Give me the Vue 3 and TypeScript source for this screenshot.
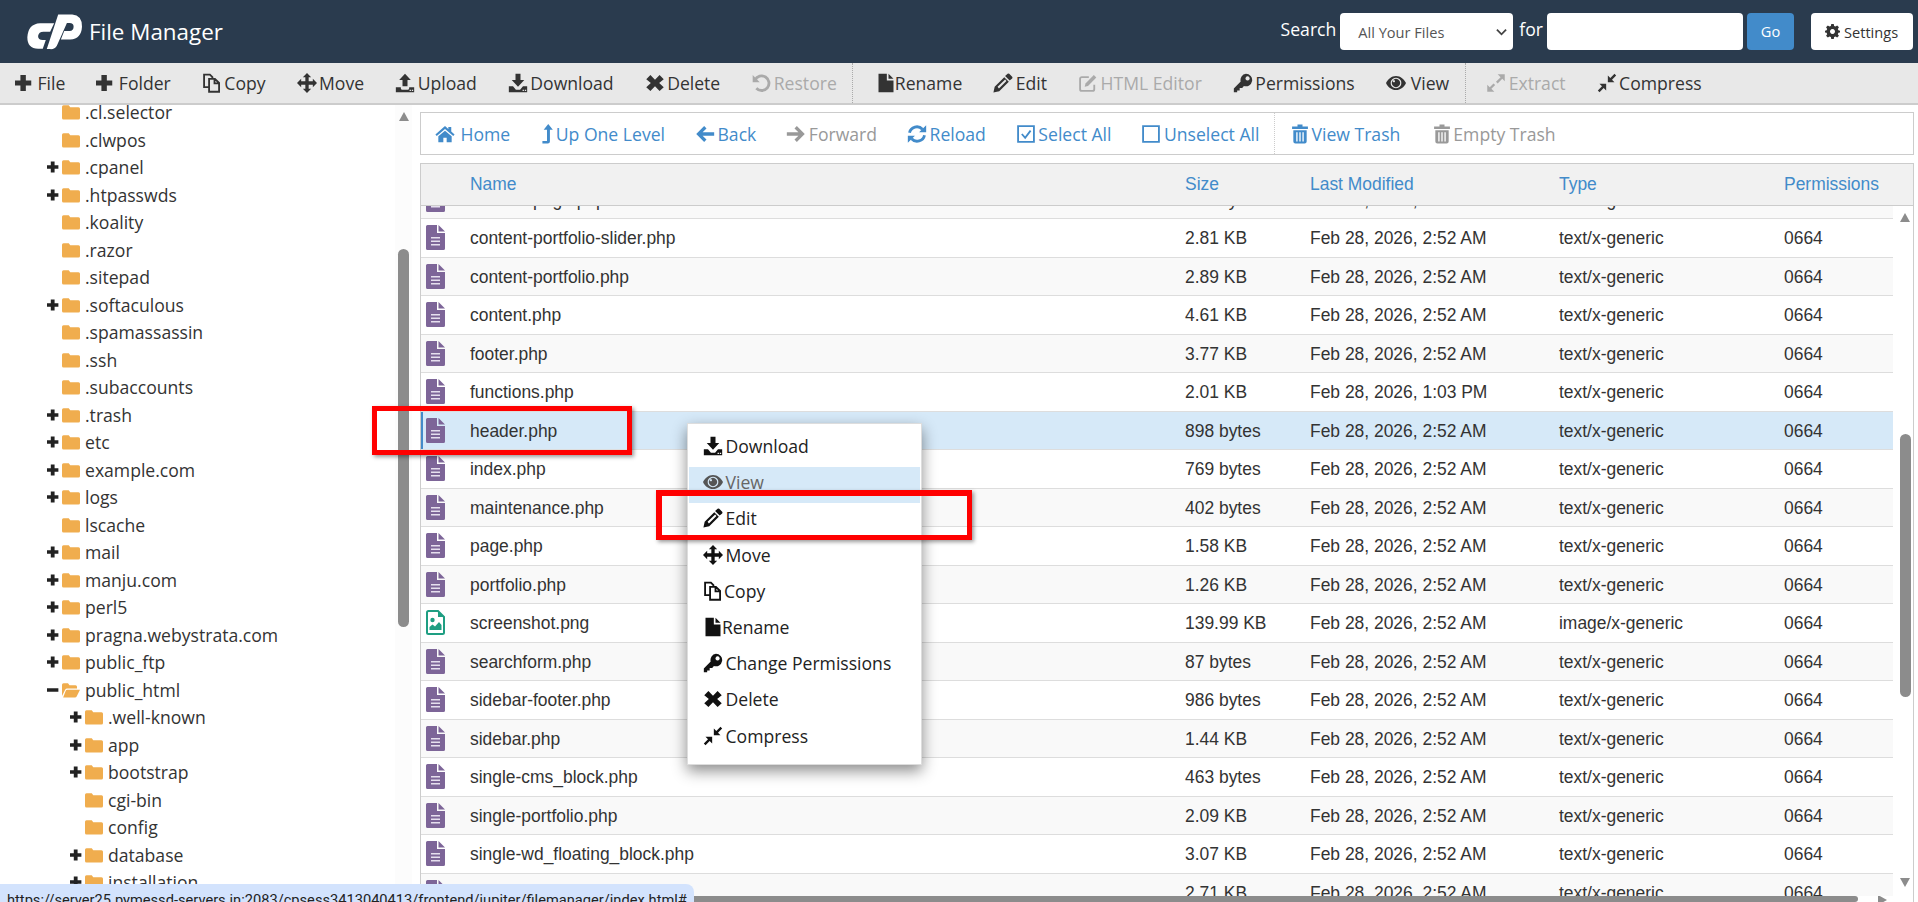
<script setup lang="ts">
import { h } from 'vue'
import type { FunctionalComponent } from 'vue'

type IconDef = { f?: string; l?: string }

// font-awesome 4 look-alikes, all on a 24 box. f = filled, l = stroked
const icons: Record<string, IconDef> = {
  plus: { f: 'M6.5 2.5H13V9h6.5v6H13v6.5H6.5V15H0V9h6.5z' },
  copy: { l: 'M8.5 17H2.5V2h7l3 3v2M8.5 7h7l5 5v10.5h-12zM15 7.5V12.5h5' },
  move: { f: 'M12 0l5 5h-3v5h5V7l5 5-5 5v-3h-5v5h3l-5 5-5-5h3v-5H5v3l-5-5 5-5v3h5V5H7z' },
  upload: { f: 'M12 1l7 7.5h-4V16H9V8.5H5zM1 17h6v1.2c0 1 .8 1.8 1.8 1.8h6.4c1 0 1.8-.8 1.8-1.8V17h6v6H1zM17.5 20h1.6v1.6h-1.6zM20.2 20h1.6v1.6h-1.6z' },
  download: { f: 'M9 1h6v7.5h4.5L12 16.5 4.5 8.5H9zM1 16h5l3.5 4h5l3.5-4h5v7H1zM17.5 20h1.6v1.6h-1.6zM20.2 20h1.6v1.6h-1.6z' },
  times: { f: 'M6.5 2.5l5.5 5.5 5.5-5.5 5 5-5.5 4.5 5.5 5-5 4.5-5.5-5.5-5.5 5.5-5-4.5 5.5-5-5.5-4.5z' },
  undo: { f: 'M2 2.5v8.5h8.5z', l: 'M4.8 8.5a8.8 8.8 0 1 1 1.6 9.8' },
  file: { f: 'M3 1h10v8h8v14H3zM15 1l6 6h-6z' },
  pencil: { f: 'M17.5 1a1.5 1.5 0 0 1 2 0l3.5 3.5a1.5 1.5 0 0 1 0 2L20 9l-5.5-5.5zM13.5 5l5.5 5.5L7.5 22l-7 1.5 1.5-7zM5.5 16.5l1.6 2 9-9-1.5-1.6z' },
  edit: { f: 'M19 2.5l3 3L12 15.5l-4 1 1-4z', l: 'M19.5 14v5.5a2 2 0 0 1-2 2H4.5a2 2 0 0 1-2-2V7a2 2 0 0 1 2-2H13' },
  key: { f: 'M15.5 1a7.5 7.5 0 1 1-2.4 14.6L11 18H8v3H5v2H1v-4.5l8.2-8.2A7.5 7.5 0 0 1 15.5 1zM17.5 4a2.5 2.5 0 1 0 .01 0z' },
  eye: { f: 'M12 3.5C6.5 3.5 2 7.5 0 12c2 4.5 6.5 8.5 12 8.5S22 16.5 24 12c-2-4.5-6.5-8.5-12-8.5zM12 5.6a6.4 6.4 0 1 0 .01 0zM12 7a5 5 0 1 1-.01 0zM9.5 8.5a1.3 1.3 0 1 0 .01 0z' },
  expand: { f: 'M14 1.5h8.5V10l-3-3-5.5 5.5-2-2L17.5 5zM10 22.5H1.5V14l3 3 4.5-4.5 2 2L6.5 19z' },
  compress: { f: 'M21 1l2 2-5 5 3 3h-8V3l3 3zM3 23l-2-2 5-5-3-3h8v8l-3-3z' },
  home: { f: 'M12 2.5L.5 12.5l1.6 1.9L12 6l9.9 8.4 1.6-1.9L19.5 9V3.5h-3.5v2.5zM12 8l-8 6.8V22h6v-5.5h4V22h6v-7.2z' },
  levelUp: { f: 'M13.5 0l5.5 7h-3.5v14a2.5 2.5 0 0 1-2.5 2.5H6.5V20.5h5.5V7H8z' },
  left: { f: 'M1.5 12L11 2.5l2.8 2.8-4.7 4.7H23v4H9.1l4.7 4.7-2.8 2.8z' },
  right: { f: 'M22.5 12L13 2.5l-2.8 2.8 4.7 4.7H1v4h13.9l-4.7 4.7 2.8 2.8z' },
  reload: { f: 'M23 1.5V10h-8.5zM1 22.5V14h8.5z', l: 'M3 10.5a9 9 0 0 1 15.5-4.2M21 13.5a9 9 0 0 1-15.5 4.2' },
  check: { l: 'M2.5 2.5h19v19h-19zM7 12l4 4.5 6.5-8.5' },
  square: { l: 'M2.5 2.5h19v19h-19z' },
  trash: { f: 'M9 .5h6v2.5h6.5v3h-19V3H9zM4 7.5h16V21a2.5 2.5 0 0 1-2.5 2.5h-11A2.5 2.5 0 0 1 4 21zM7.5 10v11h1.6V10zM11.2 10v11h1.6V10zM14.9 10v11h1.6V10z' },
  gear: { f: 'M10 0H14L14.6 3.2 16.8 4.1 19.5 2.3 22.3 5.1 20.5 7.8 21.4 10 24 10.6V13.4L21.4 14 20.5 16.2 22.3 18.9 19.5 21.7 16.8 19.9 14.6 20.8 14 24H10L9.4 20.8 7.2 19.9 4.5 21.7 1.7 18.9 3.5 16.2 2.6 14 0 13.4V10.6L2.6 10 3.5 7.8 1.7 5.1 4.5 2.3 7.2 4.1 9.4 3.2ZM12 8a4 4 0 1 0 .01 0Z' },
  folder: { f: 'M2 3h7l2 2.5h11a2 2 0 0 1 2 2V20a2 2 0 0 1-2 2H2a2 2 0 0 1-2-2V5a2 2 0 0 1 2-2z' },
  folderOpen: { f: 'M2 3h6l2 2.5h8a2 2 0 0 1 2 2V10H7a3 3 0 0 0-2.8 1.8L0 20V5a2 2 0 0 1 2-2zM7 11.5h17l-4.5 9a2.5 2.5 0 0 1-2.2 1.5H1.5L5 13a2.2 2.2 0 0 1 2-1.5z' },
  minus: { f: 'M0 9h19.5v6H0z' }
}

const Ico: FunctionalComponent<{ n: string }> = (props) => {
  const def = icons[props.n]
  const kids = []
  if (def.f) kids.push(h('path', { d: def.f, fill: 'currentColor', 'fill-rule': 'evenodd' }))
  if (def.l) kids.push(h('path', { d: def.l, fill: 'none', stroke: 'currentColor', 'stroke-width': props.n === 'undo' || props.n === 'reload' ? 3.4 : 2.2 }))
  return h('svg', { viewBox: '0 0 24 24' }, kids)
}
Ico.props = ['n']

const toolsA = [
  { icon: 'plus', label: 'File' },
  { icon: 'plus', label: 'Folder' },
  { icon: 'copy', label: 'Copy' },
  { icon: 'move', label: 'Move' },
  { icon: 'upload', label: 'Upload' },
  { icon: 'download', label: 'Download' },
  { icon: 'times', label: 'Delete' },
  { icon: 'undo', label: 'Restore', off: true }
]
const toolsB = [
  { icon: 'file', label: 'Rename', narrow: true },
  { icon: 'pencil', label: 'Edit' },
  { icon: 'edit', label: 'HTML Editor', off: true },
  { icon: 'key', label: 'Permissions' },
  { icon: 'eye', label: 'View', wide: true }
]
const toolsC = [
  { icon: 'expand', label: 'Extract', off: true },
  { icon: 'compress', label: 'Compress' }
]
const navA = [
  { icon: 'home', label: 'Home', wide: true },
  { icon: 'levelUp', label: 'Up One Level', narrow: true },
  { icon: 'left', label: 'Back' },
  { icon: 'right', label: 'Forward', off: true },
  { icon: 'reload', label: 'Reload' },
  { icon: 'check', label: 'Select All' },
  { icon: 'square', label: 'Unselect All' }
]
const navB = [
  { icon: 'trash', label: 'View Trash' },
  { icon: 'trash', label: 'Empty Trash', off: true }
]

const tree = [
  { name: '.cl.selector' }, { name: '.clwpos' }, { name: '.cpanel', t: 'plus' }, { name: '.htpasswds', t: 'plus' },
  { name: '.koality' }, { name: '.razor' }, { name: '.sitepad' }, { name: '.softaculous', t: 'plus' },
  { name: '.spamassassin' }, { name: '.ssh' }, { name: '.subaccounts' }, { name: '.trash', t: 'plus' },
  { name: 'etc', t: 'plus' }, { name: 'example.com', t: 'plus' }, { name: 'logs', t: 'plus' }, { name: 'lscache' },
  { name: 'mail', t: 'plus' }, { name: 'manju.com', t: 'plus' }, { name: 'perl5', t: 'plus' },
  { name: 'pragna.webystrata.com', t: 'plus' }, { name: 'public_ftp', t: 'plus' }, { name: 'public_html', t: 'minus' },
  { name: '.well-known', t: 'plus', sub: true }, { name: 'app', t: 'plus', sub: true }, { name: 'bootstrap', t: 'plus', sub: true },
  { name: 'cgi-bin', sub: true }, { name: 'config', sub: true }, { name: 'database', t: 'plus', sub: true },
  { name: 'installation', t: 'plus', sub: true }
]

const d = 'Feb 28, 2026, 2:52 AM'
const g = 'text/x-generic'
const files = [
  { name: 'content-page.php', size: '512 bytes', date: d, type: g },
  { name: 'content-portfolio-slider.php', size: '2.81 KB', date: d, type: g },
  { name: 'content-portfolio.php', size: '2.89 KB', date: d, type: g },
  { name: 'content.php', size: '4.61 KB', date: d, type: g },
  { name: 'footer.php', size: '3.77 KB', date: d, type: g },
  { name: 'functions.php', size: '2.01 KB', date: 'Feb 28, 2026, 1:03 PM', type: g },
  { name: 'header.php', size: '898 bytes', date: d, type: g, sel: true },
  { name: 'index.php', size: '769 bytes', date: d, type: g },
  { name: 'maintenance.php', size: '402 bytes', date: d, type: g },
  { name: 'page.php', size: '1.58 KB', date: d, type: g },
  { name: 'portfolio.php', size: '1.26 KB', date: d, type: g },
  { name: 'screenshot.png', size: '139.99 KB', date: d, type: 'image/x-generic', img: true },
  { name: 'searchform.php', size: '87 bytes', date: d, type: g },
  { name: 'sidebar-footer.php', size: '986 bytes', date: d, type: g },
  { name: 'sidebar.php', size: '1.44 KB', date: d, type: g },
  { name: 'single-cms_block.php', size: '463 bytes', date: d, type: g },
  { name: 'single-portfolio.php', size: '2.09 KB', date: d, type: g },
  { name: 'single-wd_floating_block.php', size: '3.07 KB', date: d, type: g },
  { name: 'single.php', size: '2.71 KB', date: d, type: g }
]

const menu = [
  { icon: 'download', label: 'Download' },
  { icon: 'eye', label: 'View', hover: true },
  { icon: 'pencil', label: 'Edit' },
  { icon: 'move', label: 'Move' },
  { icon: 'copy', label: 'Copy', tight: true },
  { icon: 'file', label: 'Rename', narrow: true },
  { icon: 'key', label: 'Change Permissions' },
  { icon: 'times', label: 'Delete' },
  { icon: 'compress', label: 'Compress' }
]
</script>

<template>
  <div class="app">
    <header class="top">
      <div class="brand">
        <svg class="logo" viewBox="20 20 170 108">
          <path d="M104 48L92 73H72Q58 73 56 86Q56 98 70 98H79L70 124H56Q24 124 24 90Q26 50 62 48Z" />
          <path d="M116 22H158Q187 24 187 58Q185 94 152 96H124L134 71H150Q162 70 162 58Q162 47 150 47H142L112 115Q106 126 92 125H82Z" />
        </svg>
        <span class="title">File Manager</span>
      </div>
      <div class="search">
        <span>Search</span>
        <div class="select">All Your Files
          <svg class="chev" viewBox="0 0 12 8"><path d="M1 1.5l5 5 5-5" /></svg>
        </div>
        <span>for</span>
        <div class="input"></div>
        <div class="go">Go</div>
        <div class="settings"><Ico n="gear" class="gear" />Settings</div>
      </div>
    </header>

    <nav class="tools">
      <div class="group">
        <div v-for="t in toolsA" :key="t.label" class="tool" :class="{ off: t.off }"><Ico :n="t.icon" class="ico" />{{ t.label }}</div>
      </div>
      <div class="group sep">
        <div v-for="t in toolsB" :key="t.label" class="tool" :class="{ off: t.off, narrow: t.narrow, wide: t.wide }"><Ico :n="t.icon" class="ico" />{{ t.label }}</div>
      </div>
      <div class="group sep last">
        <div v-for="t in toolsC" :key="t.label" class="tool" :class="{ off: t.off }"><Ico :n="t.icon" class="ico" />{{ t.label }}</div>
      </div>
    </nav>

    <div class="body">
      <aside class="side">
        <div class="tree">
          <div v-for="f in tree" :key="f.name" class="node" :class="{ sub: f.sub }">
            <span class="toggle"><Ico v-if="f.t" :n="f.t" /></span>
            <Ico :n="f.t === 'minus' ? 'folderOpen' : 'folder'" class="folder" />
            <span>{{ f.name }}</span>
          </div>
        </div>
        <div class="side-bar">
          <i class="arrow-up"></i>
          <div class="thumb"></div>
        </div>
      </aside>

      <main class="main">
        <div class="nav">
          <div v-for="t in navA" :key="t.label" class="link" :class="{ off: t.off, narrow: t.narrow, wide: t.wide }"><Ico :n="t.icon" class="ico" />{{ t.label }}</div>
          <div class="nav-sep"></div>
          <div v-for="t in navB" :key="t.label" class="link trash" :class="{ off: t.off }"><Ico :n="t.icon" class="ico" />{{ t.label }}</div>
        </div>

        <section class="table">
          <div class="row head">
            <span></span><span>Name</span><span>Size</span><span>Last Modified</span><span>Type</span><span>Permissions</span>
          </div>
          <div class="table-body">
            <div class="rows">
              <div v-for="f in files" :key="f.name" class="row item" :class="{ sel: f.sel }">
                <span class="cell-icon">
                  <svg v-if="f.img" class="doc" viewBox="0 0 19 25">
                    <path d="M2.5 1h9.5l6 6v15.5a1.5 1.5 0 0 1-1.5 1.5h-14A1.5 1.5 0 0 1 1 22.5v-20A1.5 1.5 0 0 1 2.5 1z" fill="#fff" stroke="#1e9e82" stroke-width="2" />
                    <path d="M12 1v6h6z" fill="#1e9e82" />
                    <circle cx="6.5" cy="10" r="2.2" fill="#1e9e82" />
                    <path d="M3.5 20v-3l3-2.5 2.5 2 4-4.5 2.5 3v5z" fill="#1e9e82" />
                  </svg>
                  <svg v-else class="doc" viewBox="0 0 19 25">
                    <path d="M1.5 0H11v8h8v15.5a1.5 1.5 0 0 1-1.5 1.5h-16A1.5 1.5 0 0 1 0 23.5v-22A1.5 1.5 0 0 1 1.5 0z" fill="#7d6598" />
                    <path d="M12.5 0L19 6.5h-6.5z" fill="#7d6598" />
                    <path d="M5 12h9v1.5H5zM5 15.5h9V17H5zM5 19h9v1.5H5z" fill="#e6dfee" />
                  </svg>
                </span>
                <span>{{ f.name }}</span>
                <span>{{ f.size }}</span>
                <span>{{ f.date }}</span>
                <span>{{ f.type }}</span>
                <span>0664</span>
              </div>
            </div>
            <div class="table-bar">
              <i class="arrow-up"></i>
              <div class="thumb"></div>
              <i class="arrow-down"></i>
            </div>
          </div>
          <div class="hbar">
            <div class="hthumb"></div>
            <i class="arrow-right"></i>
          </div>
        </section>
      </main>
    </div>

    <div class="menu">
      <div v-for="m in menu" :key="m.label" class="menu-item" :class="{ hover: m.hover, tight: m.tight, narrow: m.narrow }"><Ico :n="m.icon" class="ico" />{{ m.label }}</div>
    </div>

    <div class="mark mark-row"></div>
    <div class="mark mark-edit"></div>

    <div class="status">https://server25.pymessd-servers.in:2083/cpsess3413040413/frontend/jupiter/filemanager/index.html#</div>
  </div>
</template>

<style>
html, body {
  margin: 0;
  background: #fff;
}
</style>

<style scoped>
.app {
  position: relative;
  width: 1918px;
  height: 902px;
  overflow: hidden;
  display: flex;
  flex-direction: column;
  font-family: "Open Sans", "Liberation Sans", sans-serif;
  font-size: 17.6px;
  color: #333;
  background: #fff;
}

.top {
  height: 63px;
  flex: none;
  display: flex;
  justify-content: space-between;
  align-items: center;
  padding: 0 5px 0 26px;
  background: #2a3b4e;
  color: #fff;
}
.brand {
  display: flex;
  align-items: center;
  gap: 6px;
}
.logo {
  width: 57px;
  height: 38px;
  fill: #fff;
}
.title {
  font-size: 22.4px;
}
.search {
  display: flex;
  align-items: center;
  height: 37px;
}
.search > span {
  margin: -5px 4px 0 0;
}
.select {
  position: relative;
  box-sizing: border-box;
  width: 173px;
  height: 37px;
  margin-right: 6px;
  padding: 9px 0 0 18px;
  border-radius: 4px;
  background: #fff;
  color: #555;
  font-size: 14.6px;
}
.chev {
  position: absolute;
  right: 6px;
  top: 15px;
  width: 11px;
  height: 8px;
  fill: none;
  stroke: #444;
  stroke-width: 2;
}
.input {
  width: 196px;
  height: 37px;
  margin-right: 4px;
  border-radius: 4px;
  background: #fff;
}
.go {
  width: 47px;
  height: 37px;
  line-height: 37px;
  text-align: center;
  border-radius: 4px;
  background: #428bca;
  font-size: 14.6px;
}
.settings {
  display: flex;
  align-items: center;
  box-sizing: border-box;
  width: 102px;
  height: 37px;
  margin-left: 17px;
  padding-left: 14px;
  border-radius: 4px;
  background: #fff;
  color: #333;
  font-size: 14.6px;
}
.gear {
  width: 15px;
  height: 15px;
  margin-right: 4px;
}

.tools {
  height: 42px;
  flex: none;
  box-sizing: border-box;
  display: flex;
  margin-left: -.5px;
  background: #e8e8e8;
  border-bottom: 2px solid #ccc;
}
.group {
  display: flex;
  align-items: center;
}
.sep {
  padding-left: 7px;
  border-left: 1px dotted #aaa;
}
.sep.last {
  padding-left: 5px;
}
.tool {
  display: flex;
  align-items: center;
  padding: 0 15.5px;
  white-space: nowrap;
}
.ico {
  width: 20px;
  height: 20px;
  margin-right: 2.5px;
  flex: none;
}
.tool.narrow .ico,
.menu-item.narrow .ico {
  margin-right: -1px;
}
.tool.wide .ico {
  margin-right: 5px;
}
.off {
  color: #aaa;
}

.body {
  flex: 1;
  min-height: 0;
  display: flex;
}

.side {
  width: 420px;
  flex: none;
  display: flex;
  overflow: hidden;
}
.tree {
  flex: 1;
  margin-top: -6.5px;
  min-width: 0;
}
.node {
  display: flex;
  align-items: center;
  height: 27.5px;
  padding-left: 47px;
  white-space: nowrap;
}
.node.sub {
  padding-left: 70px;
}
.toggle {
  width: 15px;
  flex: none;
  display: flex;
  color: #222;
}
.toggle svg {
  width: 14px;
  height: 14px;
}
.folder {
  width: 18px;
  height: 18px;
  margin-right: 5px;
  flex: none;
  color: #f0ad4e;
}
.side-bar {
  width: 17px;
  margin-right: 8px;
  flex: none;
  display: flex;
  flex-direction: column;
  align-items: center;
  background: #fcfcfc;
}
.side-bar .arrow-up {
  margin-top: 7px;
}
.side-bar .thumb {
  height: 378px;
  margin-top: 128px;
}
.arrow-up {
  width: 0;
  height: 0;
  border-left: 5.5px solid transparent;
  border-right: 5.5px solid transparent;
  border-bottom: 9px solid #8c8c8c;
}
.arrow-down {
  width: 0;
  height: 0;
  border-left: 5.5px solid transparent;
  border-right: 5.5px solid transparent;
  border-top: 9px solid #8c8c8c;
}
.thumb {
  width: 11px;
  border-radius: 6px;
  background: #8c8c8c;
}

.main {
  flex: 1;
  min-width: 0;
  display: flex;
  flex-direction: column;
  padding: 7px 4px 0 0;
}
.nav {
  height: 43px;
  flex: none;
  box-sizing: border-box;
  display: flex;
  align-items: center;
  padding-left: 1.5px;
  border: 1px solid #ccc;
  color: #428bca;
}
.link {
  display: flex;
  align-items: center;
  padding: 0 12px;
  margin-right: 6px;
  white-space: nowrap;
}
.link.narrow .ico {
  margin-right: -1px;
}
.link.wide {
  margin-right: 2.5px;
}
.link.wide .ico {
  margin-right: 6px;
}
.link.trash {
  margin-right: 8px;
}
.link.trash .ico {
  margin-right: 1px;
}
.link.off {
  color: #999;
}
.nav-sep {
  align-self: stretch;
  width: 0;
  margin: 0 3px 0 -3px;
  border-left: 1px dotted #ccc;
}

.table {
  flex: 1;
  min-height: 0;
  margin-top: 8px;
  display: flex;
  flex-direction: column;
  border: 1px solid #ccc;
  border-bottom: 0;
  font-family: "Liberation Sans", Arial, sans-serif;
  font-size: 17.45px;
}
.row {
  display: grid;
  grid-template-columns: 49px 715px 125px 249px 225px 1fr;
  align-items: center;
}
.head {
  height: 42px;
  flex: none;
  box-sizing: border-box;
  background: #f1f1f1;
  border-bottom: 1px solid #ccc;
  color: #428bca;
}
.table-body {
  flex: 1;
  min-height: 0;
  display: flex;
  overflow: hidden;
}
.rows {
  flex: 1;
  min-width: 0;
  margin-top: -25.5px;
}
.item {
  box-sizing: border-box;
  height: 38.5px;
  padding-top: 1.5px;
  border-bottom: 1px solid #ddd;
  white-space: nowrap;
}
.item:nth-child(odd) {
  background: #f9f9f9;
}
.item.sel {
  background: #d6e9f8;
  box-shadow: inset 2px 0 0 #428bca;
}
.cell-icon {
  display: flex;
  padding-left: 5px;
  margin-top: -1.5px;
}
.doc {
  width: 19px;
  height: 25px;
}
.table-bar {
  width: 20px;
  flex: none;
  box-sizing: border-box;
  display: flex;
  flex-direction: column;
  align-items: center;
  padding-left: 4px;
}
.table-bar .arrow-up {
  margin-top: 7px;
}
.table-bar .thumb {
  height: 263px;
  margin-top: 212px;
}
.table-bar .arrow-down {
  margin-top: 181px;
}
.hbar {
  height: 6px;
  flex: none;
  display: flex;
  overflow: hidden;
}
.hthumb {
  width: 1437px;
  border-radius: 0 6px 6px 0;
  background: #8c8c8c;
}
.arrow-right {
  width: 0;
  height: 0;
  margin-left: 20px;
  border-top: 5.5px solid transparent;
  border-bottom: 5.5px solid transparent;
  border-left: 9px solid #8c8c8c;
  transform: translateY(-1px);
}

.menu {
  position: absolute;
  left: 687px;
  top: 423px;
  width: 235px;
  height: 342px;
  box-sizing: border-box;
  padding: 6.5px 1px 0;
  background: #fff;
  border: 1px solid #ddd;
  box-shadow: 0 6px 14px rgba(0, 0, 0, 0.45);
}
.menu-item {
  display: flex;
  align-items: center;
  box-sizing: border-box;
  height: 36.2px;
  padding: 0 0 5px 14px;
  color: #222;
  white-space: nowrap;
}
.menu-item .ico {
  color: #111;
}
.menu-item.tight .ico {
  margin-right: 1px;
}
.menu-item.hover {
  background: #d6e9f8;
  color: #666;
}
.menu-item.hover .ico {
  color: #555;
}

.mark {
  position: absolute;
  box-sizing: border-box;
  border: 5px solid #f00;
  box-shadow: 2px 2px 4px rgba(0, 0, 0, 0.4);
}
.mark-row {
  left: 372px;
  top: 406px;
  width: 260px;
  height: 49px;
}
.mark-edit {
  left: 656px;
  top: 490px;
  width: 316px;
  height: 50px;
  border-width: 6px 5px 5px 6px;
}

.status {
  position: absolute;
  left: 0;
  bottom: 0;
  box-sizing: border-box;
  width: 694px;
  height: 18px;
  padding: 4.5px 0 0 7px;
  overflow: hidden;
  border-radius: 0 8px 0 0;
  background: #d3e3fd;
  color: #222;
  font-family: Roboto, "Liberation Sans", sans-serif;
  font-size: 14.65px;
  line-height: 22px;
  white-space: nowrap;
}
</style>
